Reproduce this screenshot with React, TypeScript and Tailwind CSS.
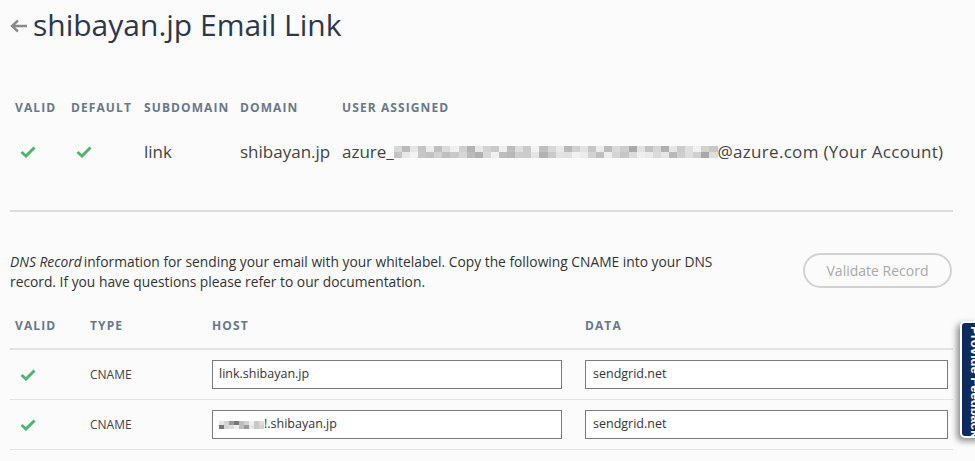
import React from "react";

const font = { fontFamily: "'Open Sans', Lato, Arial, sans-serif" };

const Check = () => (
  <svg width="16" height="12" viewBox="0 0 16 12" className="block">
    <polyline points="1.5,6 6,10 14.5,1.5" fill="none" stroke="#4db56e" strokeWidth="3" strokeLinecap="butt" strokeLinejoin="miter" />
  </svg>
);

const blur1 = [
  "#d8d8d8", "#b9b9b9", "#e5e5e5", "#c4c4c4", "#ececec", "#bfbfbf", "#dcdcdc", "#f0f0f0", "#cfcfcf", "#b3b3b3",
  "#e8e8e8", "#d3d3d3", "#c9c9c9", "#eeeeee", "#bdbdbd", "#dedede", "#cacaca", "#f2f2f2", "#c0c0c0", "#d7d7d7",
  "#e9e9e9", "#b8b8b8", "#d0d0d0", "#e3e3e3", "#c6c6c6", "#ededed", "#bcbcbc", "#dadada", "#cdcdcd", "#a9a9a9",
  "#e1e1e1", "#c2c2c2", "#d5d5d5", "#b0b0b0", "#e6e6e6", "#cbcbcb", "#dfdfdf", "#f1f1f1", "#d2d2d2", "#c7c7c7",
];
const blur2 = ["#e6e6e6", "#d4d4d4", "#9a9a9a", "#777777", "#bdbdbd", "#d0d0d0", "#efefef", "#c8c8c8", "#dddddd"];

const Blur = ({ cells, w, h }: { cells: string[]; w: number; h: number }) => (
  <span className="inline-flex flex-col align-middle">
    <span className="flex">
      {cells.map((c, i) => (
        <span key={i} style={{ width: w, height: h, background: c }} />
      ))}
    </span>
    <span className="flex">
      {cells.map((c, i) => (
        <span key={i} style={{ width: w, height: h, background: cells[(i * 7 + 3) % cells.length] }} />
      ))}
    </span>
  </span>
);

export default function App() {
  return (
    <div className="relative w-[975px] h-[461px] overflow-hidden bg-[#fbfbfb]" style={font}>
      <div className="w-[953px] pl-[10px]">
        {/* Title */}
        <div className="h-[50px] flex items-center">
          <svg width="18" height="14" viewBox="0 0 18 14" className="mr-[5px] mt-[2px]">
            <path d="M2 7 H17 M8 1.5 L2 7 L8 12.5" fill="none" stroke="#8a8a8a" strokeWidth="2.4" />
          </svg>
          <h1 className="text-[30px] leading-none text-[#2e3749] font-normal">shibayan.jp Email Link</h1>
        </div>

        {/* Table 1 */}
        <div className="mt-[48px] pl-[5px]">
          <div className="grid grid-cols-[56px_73px_96px_102px_1fr] h-[20px] items-center text-[12px] font-bold tracking-[1.1px] text-[#687888]">
            <div>VALID</div>
            <div>DEFAULT</div>
            <div>SUBDOMAIN</div>
            <div>DOMAIN</div>
            <div>USER ASSIGNED</div>
          </div>
          <div className="mt-[12px] grid grid-cols-[56px_73px_96px_102px_1fr] h-[44px] items-center text-[17px] text-[#444444]">
            <div className="pl-[5px]"><Check /></div>
            <div className="pl-[5px]"><Check /></div>
            <div>link</div>
            <div>shibayan.jp</div>
            <div className="whitespace-nowrap flex items-center">
              <span>azure_</span>
              <Blur cells={blur1} w={8.1} h={6} />
              <span className="tracking-[0.3px]">@azure.com (Your Account)</span>
            </div>
          </div>
        </div>

        {/* Divider */}
        <div className="mt-[36px] h-[2px] bg-[#dcdcdc]" />

        {/* DNS description */}
        <div className="mt-[40px] flex justify-between items-start">
          <p className="w-[722px] text-[13.8px] leading-[20px] text-[#333333]">
            <em className="font-normal pr-[2px]">DNS Record</em>information for sending your email with your whitelabel. Copy the following CNAME into your DNS record. If you have questions please refer to our documentation.
          </p>
          <button className="mt-[1px] mr-[1px] w-[149px] h-[35px] rounded-full border-2 border-[#d2d2d2] text-[14px] text-[#a9a9a9] bg-transparent">
            Validate Record
          </button>
        </div>

        {/* Table 2 */}
        <div className="mt-[23px]">
          <div className="grid grid-cols-[75px_122px_373px_1fr] pl-[5px] leading-[22px] pb-[11px] border-b-2 border-[#e2e2e2] text-[12px] font-bold tracking-[1.1px] text-[#687888]">
            <div>VALID</div>
            <div>TYPE</div>
            <div>HOST</div>
            <div>DATA</div>
          </div>
          {[0, 1].map((r) => (
            <div key={r} className="grid grid-cols-[75px_122px_373px_1fr] pl-[5px] pr-[5px] h-[50px] items-center border-b border-[#e3e3e3] text-[12px] text-[#444444]">
              <div className="pl-[5px]"><Check /></div>
              <div>CNAME</div>
              <div className="pr-[23px]">
                <div className="h-[29px] bg-white border border-[#7a7a7a] flex items-center pl-[6px] text-[12.5px] text-[#333]">
                  {r === 0 ? (
                    <span>link.shibayan.jp</span>
                  ) : (
                    <span className="flex items-center">
                      <Blur cells={blur2} w={5} h={4} />
                      <span>!.shibayan.jp</span>
                    </span>
                  )}
                </div>
              </div>
              <div>
                <div className="h-[29px] bg-white border border-[#7a7a7a] flex items-center pl-[7px] text-[12.5px] text-[#333]">
                  sendgrid.net
                </div>
              </div>
            </div>
          ))}
        </div>
      </div>

      {/* Feedback tab */}
      <div className="absolute left-[960px] top-[321px] w-[30px] h-[117px] rounded-[5px] border-2 border-white bg-[#0c2d5c] shadow-[-3px_3px_6px_rgba(0,0,0,0.45)] flex justify-center pt-[3px]">
        <span className="text-white text-[13px] font-bold leading-none [writing-mode:vertical-rl] whitespace-nowrap" style={{ fontFamily: "Arial, 'Liberation Sans', sans-serif" }}>
          Provide Feedback
        </span>
      </div>
    </div>
  );
}
